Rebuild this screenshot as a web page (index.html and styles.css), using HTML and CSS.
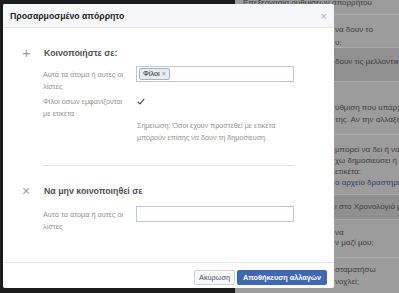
FILE: index.html
```html
<!doctype html>
<html lang="el">
<head>
  <meta charset="utf-8">
  <title>Προσαρμοσμένο απόρρητο</title>
  <link rel="stylesheet" href="styles.css">
</head>
<body>
  <div class="page">
    <div class="page-left"></div>
    <div class="page-right">
      <div class="prow prow-top"><p>Επεξεργασία ρυθμίσεων απορρήτου</p></div>
      <div class="prow prow-a"><p>να δουν το</p><p>υ;</p></div>
      <div class="prow prow-b dark"><p>δουν τις μελλοντικές</p></div>
      <div class="prow prow-c"><p>ύθμιση που υπάρχει</p><p>της. Αν την αλλάξετε</p></div>
      <div class="prow prow-d"><p>μπορεί να δει ή να δ</p><p>χω δημοσιεύσει ή στις</p><p>ετικέτα:</p><p class="plink">ο αρχείο δραστηριότητας</p></div>
      <div class="prow prow-e dark"><p>ι στο Χρονολόγιό μου</p></div>
      <div class="prow prow-g"><p>να</p><p>ν μαζί μου;</p></div>
      <div class="prow prow-h"><p>σταματήσω</p><p>νοχλεί;</p></div>
    </div>
  </div>

  <div class="dialog">
    <div class="dialog-head">
      <span class="dialog-title">Προσαρμοσμένο απόρρητο</span>
      <span class="dialog-close">×</span>
    </div>
    <div class="dialog-body">
      <div class="section">
        <div class="section-head">
          <span class="section-icon plus">+</span>
          <span class="section-title">Κοινοποιήστε σε:</span>
        </div>
        <div class="field-row row-people">
          <div class="field-label">Αυτά τα άτομα ή αυτές οι λίστες</div>
          <div class="field-input"><span class="token">Φίλοι <span class="token-x">×</span></span></div>
        </div>
        <div class="field-row row-tagged">
          <div class="field-label">Φίλοι όσων εμφανίζονται με ετικέτα</div>
          <div class="field-check">
            <svg width="8" height="7" viewBox="0 0 8 7"><path d="M0.8 3.8 L3 5.9 L7.2 0.8" fill="none" stroke="#4b4f56" stroke-width="1.2"/></svg>
          </div>
        </div>
        <p class="note">Σημείωση: Όσοι έχουν προστεθεί με ετικέτα μπορούν επίσης να δουν τη δημοσίευση.</p>
      </div>
      <div class="divider"></div>
      <div class="section section-2">
        <div class="section-head">
          <span class="section-icon cross">×</span>
          <span class="section-title">Να μην κοινοποιηθεί σε</span>
        </div>
        <div class="field-row row-exclude">
          <div class="field-label">Αυτά τα άτομα ή αυτές οι λίστες</div>
          <div class="field-input"></div>
        </div>
      </div>
    </div>
    <div class="dialog-foot">
      <button class="btn">Ακύρωση</button>
      <button class="btn btn-primary">Αποθήκευση αλλαγών</button>
    </div>
  </div>
</body>
</html>
```

FILE: styles.css
```css
html, body{
  margin: 0;
  padding: 0;
  width: 399px;
  height: 293px;
  overflow: hidden;
}
body{
  font-family: "Liberation Sans", Arial, sans-serif;
  background-color: #1c1c1c;
  position: relative;
}
.page{
  display: flex;
  height: 293px;
}
.page-left{
  width: 235px;
  background-color: #1c1c1c;
}
.page-right{
  flex: 1;
  background-color: #9c9c9c;
  color: #3d3d3d;
  font-size: 8px;
  line-height: 11px;
  overflow: hidden;
  white-space: nowrap;
}
.prow{
  padding-left: 100px;
  border-bottom: 1px solid #ababab;
  box-sizing: border-box;
  overflow: hidden;
}
.prow p{
  margin: 0;
}
.prow.dark{
  background-color: #909090;
}
.prow-top{
  height: 15px;
  padding-left: 8px;
  line-height: 6px;
}
.prow-a{ height: 33px; padding-top: 8px; line-height: 13px; }
.prow-b{ height: 34px; padding-top: 8px; }
.prow-c{ height: 53px; padding-top: 20px; line-height: 12px; }
.prow-d{ height: 60px; padding-top: 9px; }
.prow-e{ height: 25px; padding-top: 6px; }
.prow-g{ height: 38px; padding-top: 8px; line-height: 10px; }
.prow-h{ height: 40px; padding-top: 6px; line-height: 12px; border-bottom: none; }
.plink{
  color: #2f3f66;
}

.dialog{
  position: absolute;
  left: 3px;
  top: 4px;
  width: 331px;
  height: 284px;
  background-color: #ffffff;
  border-radius: 2px;
  display: flex;
  flex-direction: column;
  overflow: hidden;
}
.dialog-head{
  height: 24px;
  box-sizing: border-box;
  background-color: #f6f7f9;
  border-bottom: 1px solid #e5e5e5;
  display: flex;
  align-items: center;
  justify-content: space-between;
  padding: 0 7px;
}
.dialog-title{
  font-size: 8.7px;
  font-weight: bold;
  color: #1d2129;
}
.dialog-close{
  font-size: 11px;
  color: #b0b0b0;
  margin-top: 1px;
}
.dialog-body{
  flex: 1;
  padding: 0 40px 0 18px;
}
.section{
  padding-top: 16px;
}
.section-head{
  display: flex;
  align-items: center;
  height: 18px;
}
.section-icon{
  width: 22px;
  color: #9a9da3;
  line-height: 18px;
}
.section-icon.plus{
  font-size: 15px;
  padding-left: 1px;
}
.section-icon.cross{
  font-size: 14px;
  padding-left: 1px;
}
.section-title{
  font-size: 8.8px;
  font-weight: bold;
  color: #4b4f56;
}
.field-row{
  display: flex;
  padding-left: 22px;
}
.field-label{
  width: 93px;
  box-sizing: border-box;
  padding-right: 6px;
  font-size: 7.3px;
  line-height: 11.5px;
  color: #8f9093;
}
.row-people{
  margin-top: 4px;
}
.row-people .field-label{
  padding-top: 3px;
}
.field-input{
  width: 158px;
  height: 16px;
  box-sizing: border-box;
  border: 1px solid #bdc7d8;
  padding: 0 2px;
  display: flex;
  align-items: center;
}
.token{
  display: block;
  height: 12px;
  padding: 0 3px;
  font-size: 7.3px;
  line-height: 10px;
  color: #1d2129;
  background-color: #e9ebee;
  border: 1px solid #9cb4d8;
  border-radius: 2px;
  box-sizing: border-box;
}
.token-x{
  color: #7f7f7f;
  font-size: 7px;
}
.row-tagged{
  margin-top: 4px;
}
.field-check{
  padding: 2px 0 0 1px;
}
.field-check svg{
  display: block;
}
.note{
  margin: 1px 0 0 116px;
  max-width: 150px;
  font-size: 7.2px;
  line-height: 12px;
  color: #909090;
}
.divider{
  margin: 21px 0 0 22px;
  border-top: 1px solid #dddfe2;
}
.section-2{
  padding-top: 16px;
}
.row-exclude{
  margin-top: 6px;
}
.row-exclude .field-label{
  padding-top: 3px;
}
.dialog-foot{
  height: 26px;
  box-sizing: border-box;
  border-top: 1px solid #e5e5e5;
  display: flex;
  justify-content: flex-end;
  align-items: flex-start;
  gap: 2px;
  padding: 7px 7px 0 0;
}
.btn{
  height: 15px;
  padding: 0 4px;
  font-family: "Liberation Sans", Arial, sans-serif;
  font-size: 7.3px;
  color: #4b4f56;
  background-color: #f6f7f9;
  border: 1px solid #ced0d4;
  border-radius: 2px;
}
.btn-primary{
  font-weight: bold;
  color: #ffffff;
  background-color: #4267b2;
  border-color: #4267b2;
  padding: 0 5px;
}
```
